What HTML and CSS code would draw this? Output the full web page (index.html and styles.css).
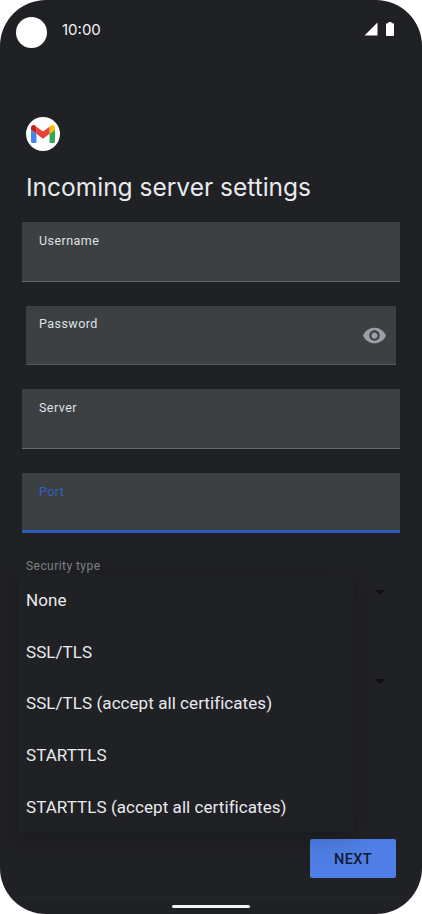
FILE: index.html
```html
<!DOCTYPE html>
<html lang="en">
  <head>
    <meta charset="UTF-8" />
    <meta name="viewport" content="width=device-width, initial-scale=1.0" />
    <title>Incoming server settings</title>
    <link rel="stylesheet" href="styles.css">
  </head>
  <body>
    <div class="screen">
      <div class="status-bar">
        <div class="camera"></div>
        <span class="time">10:00</span>
        <div class="status-icons">
          <svg class="signal" width="14" height="14" viewBox="0 0 14 14"><path fill="#fff" d="M13.5 0.5V13.5H0.5Z"/></svg>
          <svg class="battery" width="8" height="14" viewBox="0 0 8 14"><path fill="#fff" d="M2.5 0h3v1.3h1.4c.6 0 1.1.5 1.1 1.1v10.5c0 .6-.5 1.1-1.1 1.1H1.1C.5 14 0 13.5 0 12.9V2.4c0-.6.5-1.1 1.1-1.1h1.4Z"/></svg>
        </div>
      </div>

      <div class="logo">
        <svg width="24" height="18" viewBox="52 42 88 66">
          <path fill="#4285f4" d="M58 108h14V74L52 59v43c0 3.32 2.69 6 6 6"/>
          <path fill="#34a853" d="M120 108h14c3.32 0 6-2.69 6-6V59l-20 15"/>
          <path fill="#fbbc04" d="M120 48v26l20-15v-8c0-7.42-8.47-11.65-14.4-7.2"/>
          <path fill="#ea4335" d="M72 74V48l24 18 24-18v26L96 92"/>
          <path fill="#c5221f" d="M52 51v8l20 15V48l-5.6-4.2c-5.94-4.45-14.4-.22-14.4 7.2"/>
        </svg>
      </div>
      <h1>Incoming server settings</h1>

      <div class="form">
        <div class="field"><label>Username</label></div>
        <div class="field field-password">
          <label>Password</label>
          <svg class="eye" width="25" height="25" viewBox="0 0 24 24"><path fill="#9aa0a6" d="M12 4.5C7 4.5 2.73 7.61 1 12c1.73 4.39 6 7.5 11 7.5s9.27-3.11 11-7.5c-1.73-4.39-6-7.5-11-7.5zM12 17c-2.76 0-5-2.24-5-5s2.24-5 5-5 5 2.24 5 5-2.24 5-5 5zm0-8c-1.66 0-3 1.34-3 3s1.34 3 3 3 3-1.34 3-3-1.34-3-3-3z"/></svg>
        </div>
        <div class="field"><label>Server</label></div>
        <div class="field field-active"><label>Port</label></div>
      </div>

      <div class="select-label">Security type</div>
      <div class="select-row"><span class="arrow"></span></div>
      <div class="select-row select-row-second"><span class="arrow"></span></div>

      <div class="actions">
        <button>NEXT</button>
      </div>
      <div class="nav-bar"><div class="home"></div></div>

      <!-- open dropdown, lies over the rows below it -->
      <div class="menu">
        <div class="menu-item">None</div>
        <div class="menu-item">SSL/TLS</div>
        <div class="menu-item">SSL/TLS (accept all certificates)</div>
        <div class="menu-item">STARTTLS</div>
        <div class="menu-item">STARTTLS (accept all certificates)</div>
      </div>
    </div>
  </body>
</html>
```

FILE: styles.css
```css
body {
  font-family: Roboto, Arial, sans-serif;
  margin: 0;
  padding: 0;
  background-color: #fff;
}
.screen {
  position: relative;
  display: flex;
  flex-direction: column;
  width: 422px;
  height: 914px;
  border-radius: 46px;
  overflow: hidden;
  background-color: #202124;
  color: #e8eaed;
}

/* Status bar */
.status-bar {
  display: flex;
  align-items: flex-start;
  height: 48px;
  padding: 17px 28px 0 16px;
  box-sizing: border-box;
  flex: none;
}
.camera {
  width: 31px;
  height: 31px;
  border-radius: 50%;
  background: #fff;
}
.time {
  margin-left: 15px;
  font-family: Inter, Roboto, sans-serif;
  font-size: 15px;
  line-height: 26px;
  color: #f1f3f4;
}
.status-icons {
  display: flex;
  gap: 8px;
  margin-left: auto;
  margin-top: 5px;
}

/* Header */
.logo {
  display: flex;
  align-items: center;
  justify-content: center;
  flex: none;
  width: 34px;
  height: 34px;
  margin: 69px 0 19px 26px;
  border-radius: 50%;
  background: #fff;
}
h1 {
  margin: 0 0 18px 26px;
  font-family: Inter, Roboto, sans-serif;
  font-size: 24.5px;
  font-weight: 400;
  line-height: 34px;
  color: #e8eaed;
}

/* Fields */
.form {
  display: flex;
  flex-direction: column;
  gap: 24px;
  padding: 0 22px;
}
.field {
  display: flex;
  justify-content: space-between;
  align-items: flex-start;
  box-sizing: border-box;
  height: 59.67px;
  padding: 11px 17px 0;
  background: #3c4043;
  border-bottom: 1px solid #66696d;
}
.field label {
  font-size: 12.5px;
  line-height: 16px;
  letter-spacing: 0.45px;
  color: #dfe1e5;
}
.field-password {
  margin: 0 4px;
  padding: 10px 9px 0 13px;
  border-bottom-color: #55585c;
}
.eye {
  margin-top: 7px;
}
.field-active {
  border-bottom: 3px solid #2b5bb8;
}
.field-active label {
  color: #3062c4;
}

/* Selects behind the dropdown */
.select-label {
  margin: 25px 0 0 26px;
  font-size: 12px;
  line-height: 16px;
  letter-spacing: 0.45px;
  color: #80868b;
}
.select-row {
  display: flex;
  justify-content: flex-end;
  align-items: center;
  height: 38px;
  padding-right: 37px;
}
.select-row-second {
  margin-top: 51px;
}
.arrow {
  width: 0;
  height: 0;
  border-left: 5px solid transparent;
  border-right: 5px solid transparent;
  border-top: 5px solid #0e0f11;
}

/* Next button */
.actions {
  display: flex;
  justify-content: flex-end;
  margin-top: auto;
  margin-bottom: 19px;
  padding: 0 26px;
}
.actions button {
  width: 86px;
  height: 39.5px;
  padding: 2px 0 0;
  border: none;
  border-radius: 2px;
  background: #4f7fe6;
  color: #0f1a33;
  font-family: Roboto, Arial, sans-serif;
  font-size: 14.5px;
  font-weight: 500;
  letter-spacing: 0.4px;
}

/* Gesture bar */
.nav-bar {
  display: flex;
  justify-content: center;
  box-sizing: border-box;
  height: 17px;
  padding-top: 7px;
  border-top: 1px solid #25262a;
  flex: none;
}
.home {
  width: 78px;
  height: 2.5px;
  border-radius: 2px;
  background: #f1f3f4;
}

/* Open dropdown */
.menu {
  position: absolute;
  top: 574px;
  left: 18px;
  width: 335px;
  background: #202124;
  box-shadow: 0 6px 22px rgba(0, 0, 0, 0.22);
}
.menu-item {
  display: flex;
  align-items: center;
  box-sizing: border-box;
  height: 51.6px;
  padding: 1px 0 0 8px;
  font-size: 17px;
  letter-spacing: 0.06px;
  color: #e8eaed;
}
```
